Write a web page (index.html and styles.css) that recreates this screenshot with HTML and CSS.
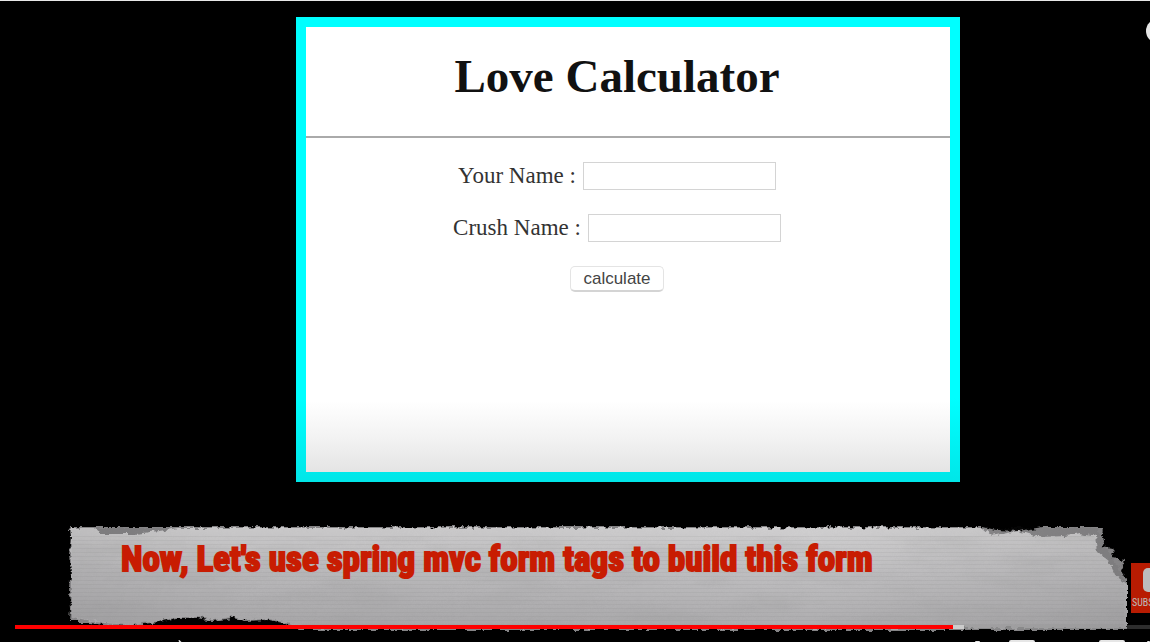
FILE: index.html
```html
<!DOCTYPE html>
<html lang="en">
<head>
<meta charset="utf-8">
<title>Love Calculator</title>
<link rel="stylesheet" href="styles.css">
</head>
<body>
<main class="player">
  <section class="frame">
    <h1 class="title">Love Calculator</h1>
    <hr class="rule">
    <form class="form">
      <div class="field">
        <label for="your-name">Your Name :</label>
        <input id="your-name" class="box" type="text">
      </div>
      <div class="field">
        <label for="crush-name">Crush Name :</label>
        <input id="crush-name" class="box" type="text">
      </div>
      <button class="submit" type="button">calculate</button>
    </form>
  </section>

  <button class="info" type="button" aria-label="Info"></button>

  <section class="banner">
    <div class="paper">
      <svg class="paper-art" viewBox="0 0 1060 108" preserveAspectRatio="none" aria-hidden="true">
        <defs>
          <linearGradient id="sheet" x1="0" y1="0" x2="0" y2="1">
            <stop offset="0" stop-color="#cdcccd"/>
            <stop offset=".45" stop-color="#bcbbbd"/>
            <stop offset="1" stop-color="#a8a7a9"/>
          </linearGradient>
          <linearGradient id="shade" x1="0" y1="0" x2="1" y2="0">
            <stop offset="0" stop-color="#000" stop-opacity=".07"/>
            <stop offset=".15" stop-color="#000" stop-opacity=".02"/>
            <stop offset=".7" stop-color="#fff" stop-opacity=".05"/>
            <stop offset="1" stop-color="#000" stop-opacity=".06"/>
          </linearGradient>
          <pattern id="lines" width="8" height="4" patternUnits="userSpaceOnUse">
            <rect width="8" height="1" fill="#777" opacity=".1"/>
          </pattern>
          <filter id="rough" x="-1%" y="-5%" width="102%" height="110%" color-interpolation-filters="sRGB">
            <feTurbulence type="fractalNoise" baseFrequency=".16 .22" numOctaves="3" seed="6"/>
            <feDisplacementMap in="SourceGraphic" scale="6" xChannelSelector="R" yChannelSelector="G"/>
          </filter>
          <filter id="grain" x="0" y="0" width="100%" height="100%">
            <feTurbulence type="fractalNoise" baseFrequency=".012 .05" numOctaves="4" seed="9"/>
            <feColorMatrix values="0 0 0 0 .3  0 0 0 0 .3  0 0 0 0 .3  .5 0 0 0 -.22"/>
            <feComposite in2="SourceGraphic" operator="in"/>
          </filter>
        </defs>
        <g filter="url(#rough)">
          <path fill="#858486" d="M1 3H30L60 3H915L928 6L950 7L975 3H1035L1034 10L1036 16L1033 22L1044 24L1046 29L1043 34L1057 36L1053 46L1059 56V106H231L215 99L200 96L176 97L165 94L145 97L130 94L108 94L92 98L75 100L60 102L35 101L22 99L11 99V96L1 96L2 85L1 62L3 52L1 30L3 12Z"/>
          <path fill="url(#sheet)" d="M3 4H26L33 10L68 10L90 7L110 4H915L924 12L950 7L970 13L998 12L1012 9L1028 12L1030 28L1042 38L1048 52L1059 60V104H235L215 98L200 95L176 96L165 93L145 96L130 93L108 93L92 97L75 99L60 101L25 98L3 94Z"/>
          <path fill="url(#shade)" d="M3 4H1028L1059 60V104H235L200 95H108L60 101L3 94Z"/>
        </g>
        <path fill="url(#lines)" d="M4 12H1026L1056 60V102H240L200 92H108L60 97L4 92Z"/>
        <path filter="url(#grain)" d="M4 12H1026L1056 60V102H240L200 92H108L60 97L4 92Z"/>
      </svg>
      <p class="caption">Now, Let's use spring mvc form tags to build this form</p>
    </div>
    <button class="subscribe" type="button" aria-label="Subscribe">
      <span class="subscribe-icon"></span>
      <span class="subscribe-text">SUBS</span>
    </button>
  </section>

  <div class="progress"><span class="played"></span><span class="loaded"></span></div>

  <div class="controls">
    <svg class="volume" viewBox="0 0 6 4" aria-hidden="true"><path fill="#ddd" d="M0 0h2l4 4H1z"/></svg>
    <span class="mark small"></span>
    <span class="mark"></span>
    <span class="mark wide-gap"></span>
    <span class="mark last"></span>
  </div>
</main>
</body>
</html>
```
FILE: styles.css
```css
* {
  box-sizing: border-box;
}

body {
  margin: 0;
  background: #000;
}

.player {
  position: relative;
  display: flex;
  flex-direction: column;
  height: 100vh;
  padding-top: 16px;
  border-top: 1px solid #e8e8e8;
  overflow: hidden;
}

.frame {
  flex: none;
  width: 58%;
  max-width: 664px;
  min-height: 465px;
  margin-left: 296px;
  border: 10px solid;
  border-image: linear-gradient(#0ff 82%, #00e6e8) 10;
  background: linear-gradient(#fff 84%, #f3f3f3 92%, #e4e4e4) padding-box;
  color: #333;
  font: 23px/28px "Liberation Serif", serif;
}

.title {
  margin: 0;
  padding: 22px 22px 33px 0;
  text-align: center;
  color: #111;
  font-size: 47px;
  line-height: 54px;
}

.rule {
  height: 2px;
  margin: 0;
  border: 0;
  background: #aaa;
}

.form {
  display: flex;
  flex-direction: column;
  align-items: center;
  gap: 24px;
  padding: 24px 22px 0 0;
}

.field {
  display: flex;
  align-items: center;
  gap: 7px;
}

.box {
  width: 193px;
  height: 28px;
  padding: 2px 4px;
  border: 1px solid #d4d4d4;
  background: #fff;
  font: inherit;
}

.submit {
  width: 94px;
  height: 26px;
  padding: 0;
  border: 1px solid #e4e4e4;
  border-bottom: 2px solid #d4d4d4;
  border-radius: 5px;
  background: #fff;
  color: #444;
  font: 17px/22px "Liberation Sans", sans-serif;
}

.info {
  position: absolute;
  top: 18px;
  right: -20px;
  width: 24px;
  height: 24px;
  padding: 0;
  border: 0;
  border-radius: 50%;
  background: #e6e6e6;
}

.banner {
  display: flex;
  align-items: center;
  gap: 3px;
  margin: 42px 0 0 68px;
}

.paper {
  position: relative;
  flex: 1;
  height: 108px;
}

.paper-art {
  position: absolute;
  width: 100%;
  height: 100%;
}

.caption {
  position: relative;
  margin: 0;
  padding: 12px 0 0 53px;
  color: #c81c02;
  font: bold 35px/48px Impact, "Liberation Sans Narrow", "Roboto Condensed", "Open Sans Condensed", "DejaVu Sans Condensed", sans-serif;
  white-space: nowrap;
  -webkit-text-stroke: 2px #c81c02;
}

.subscribe {
  flex: none;
  display: flex;
  flex-direction: column;
  gap: 4px;
  width: 60px;
  height: 50px;
  margin: 20px -41px 0 0;
  padding: 5px 0 0 1px;
  border: 0;
  background: #b81c02;
}

.subscribe-icon {
  width: 36px;
  height: 24px;
  margin-left: 11px;
  border-radius: 5px;
  background: #bcbcbc;
}

.subscribe-text {
  align-self: flex-start;
  color: #bcbcbc;
  font: 10px/14px "Liberation Sans Narrow", "Roboto Condensed", sans-serif;
}

.progress {
  position: absolute;
  right: 0;
  bottom: 13px;
  left: 15px;
  display: flex;
  height: 4px;
  background: rgba(150, 150, 150, .3);
}

.played {
  width: 938px;
  background: #f00;
}

.loaded {
  width: 11px;
  background: #ccc;
}

.controls {
  position: absolute;
  right: 0;
  bottom: 0;
  left: 0;
  display: flex;
  align-items: flex-end;
  height: 2px;
}

.volume {
  width: 6px;
  height: 2px;
  margin: 0 auto 0 177px;
}

.mark {
  width: 26px;
  height: 2px;
  border-radius: 2px 2px 0 0;
  background: #e6e6e6;
}

.small {
  width: 5px;
  height: 1px;
  margin-right: 29px;
}

.wide-gap {
  margin-left: 64px;
}

.last {
  width: 3px;
  height: 1px;
  margin-left: 22px;
}
```
